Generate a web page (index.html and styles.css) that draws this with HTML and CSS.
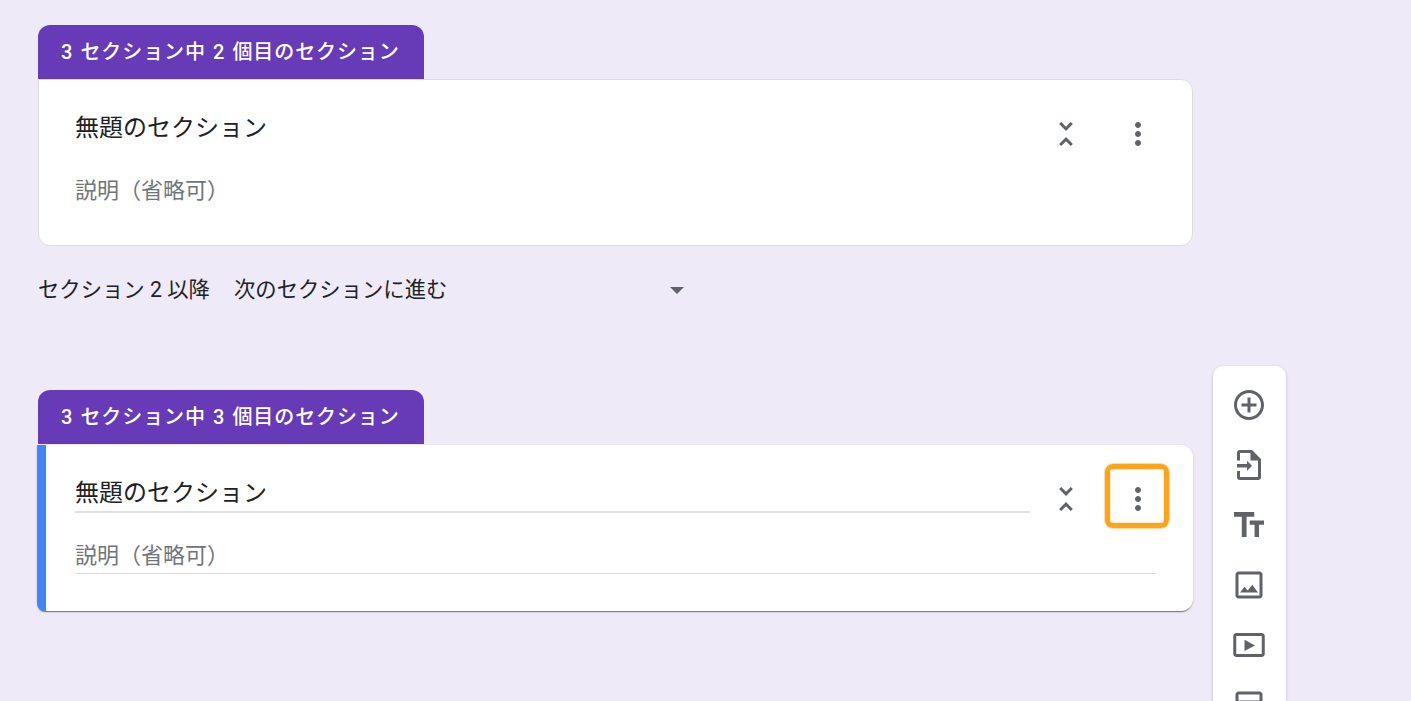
FILE: index.html
```html
<!DOCTYPE html>
<html lang="ja">
<head>
  <meta charset="utf-8">
  <link rel="stylesheet" href="styles.css">
</head>
<body>
  <div class="page">
    <main class="sections">
      <section class="section">
        <div class="section-tab">3 セクション中 2 個目のセクション</div>
        <div class="card">
          <div class="card-head">
            <div class="title-field">無題のセクション</div>
            <button class="icon-btn">
              <svg class="icon" viewBox="0 0 24 24"><path d="M7.41 18.59L8.83 20 12 16.83 15.17 20l1.41-1.41L12 14l-4.59 4.59zm9.18-13.18L15.17 4 12 7.17 8.83 4 7.41 5.41 12 10l4.59-4.59z"/></svg>
            </button>
            <button class="icon-btn">
              <svg class="icon" viewBox="0 0 24 24"><path d="M12 8c1.1 0 2-.9 2-2s-.9-2-2-2-2 .9-2 2 .9 2 2 2zm0 2c-1.1 0-2 .9-2 2s.9 2 2 2 2-.9 2-2-.9-2-2-2zm0 6c-1.1 0-2 .9-2 2s.9 2 2 2 2-.9 2-2-.9-2-2-2z"/></svg>
            </button>
          </div>
          <div class="desc-field">説明（省略可）</div>
        </div>
        <div class="after-row">
          <span class="after-label">セクション 2 以降</span>
          <div class="after-select">
            <span>次のセクションに進む</span>
            <span class="select-arrow"></span>
          </div>
        </div>
      </section>

      <section class="section">
        <div class="section-tab">3 セクション中 3 個目のセクション</div>
        <div class="card active">
          <div class="card-head">
            <div class="title-field">無題のセクション</div>
            <button class="icon-btn">
              <svg class="icon" viewBox="0 0 24 24"><path d="M7.41 18.59L8.83 20 12 16.83 15.17 20l1.41-1.41L12 14l-4.59 4.59zm9.18-13.18L15.17 4 12 7.17 8.83 4 7.41 5.41 12 10l4.59-4.59z"/></svg>
            </button>
            <button class="icon-btn highlighted">
              <svg class="icon" viewBox="0 0 24 24"><path d="M12 8c1.1 0 2-.9 2-2s-.9-2-2-2-2 .9-2 2 .9 2 2 2zm0 2c-1.1 0-2 .9-2 2s.9 2 2 2 2-.9 2-2-.9-2-2-2zm0 6c-1.1 0-2 .9-2 2s.9 2 2 2 2-.9 2-2-.9-2-2-2z"/></svg>
            </button>
          </div>
          <div class="desc-field">説明（省略可）</div>
        </div>
      </section>
    </main>

    <aside class="toolbar">
      <svg class="icon" viewBox="0 0 24 24"><path d="M13 7h-2v4H7v2h4v4h2v-4h4v-2h-4V7zm-1-5C6.48 2 2 6.48 2 12s4.48 10 10 10 10-4.48 10-10S17.52 2 12 2zm0 18c-4.41 0-8-3.59-8-8s3.59-8 8-8 8 3.59 8 8-3.59 8-8 8z"/></svg>
      <svg class="icon" viewBox="0 0 24 24"><path d="M14 2H6a2 2 0 0 0-2 2v5h2V4h7v5h5v11H6v-4H4v4a2 2 0 0 0 2 2h12a2 2 0 0 0 2-2V8z"/><path d="M4 11.300h6.700V9.200l3.300 3.300-3.300 3.300v-2.100H4z"/></svg>
      <svg class="icon" viewBox="0 0 24 24"><path d="M2 3.300v3.200h5.200V20h3.200V6.500h5.100V3.300zM22 9h-9.500v2.800h3.200V20h3v-8.200H22z"/></svg>
      <svg class="icon" viewBox="0 0 24 24"><path d="M19 5v14H5V5h14m0-2H5c-1.1 0-2 .9-2 2v14c0 1.1.9 2 2 2h14c1.1 0 2-.9 2-2V5c0-1.1-.9-2-2-2zm-4.860 8.860l-3 3.870L9 13.140 6 17h12l-3.860-5.140z"/></svg>
      <svg class="icon" viewBox="0 0 24 24"><path d="M20.500 4h-17C2.400 4 1.500 4.900 1.500 6v12c0 1.100.9 2 2 2h17c1.100 0 2-.9 2-2V6c0-1.100-.9-2-2-2zm0 14h-17V6h17v12zM9 8.500v7.500l7-3.750z"/></svg>
      <svg class="icon" viewBox="0 0 24 24"><path d="M19 3H5c-1.100 0-2 .9-2 2v6h18V5c0-1.100-.9-2-2-2zm0 6H5V5h14v4zM3 13v6c0 1.100.9 2 2 2h14c1.100 0 2-.9 2-2v-6H3zm16 6H5v-4h14v4z"/></svg>
    </aside>
  </div>
</body>
</html>
```

FILE: styles.css
```css
:root {
  --bg: #eeeaf8;
  --purple: #673ab7;
  --blue: #4285f4;
  --text: #202124;
  --muted: #70757a;
  --icon: #5f6368;
  --line: #dadce0;
  --mark: #ffa31a;
}

* {
  margin: 0;
  padding: 0;
  box-sizing: border-box;
}

html, body {
  height: 701px;
  overflow: hidden;
}

body {
  background: var(--bg);
  color: var(--text);
  font-family: Roboto, 'Noto Sans CJK JP', sans-serif;
}

.page {
  display: flex;
  align-items: flex-start;
  gap: 20px;
  padding: 25px 0 0 38px;
}

.sections {
  width: 1155px;
  flex-shrink: 0;
}

.section-tab {
  width: 386px;
  height: 54px;
  display: flex;
  align-items: center;
  padding: 0 0 4px 23px;
  background: var(--purple);
  color: #fff;
  font-size: 20px;
  font-weight: 500;
  letter-spacing: 0.9px;
  word-spacing: 1.3px;
  border-radius: 12px 12px 0 0;
  white-space: pre;
}

.card {
  height: 167px;
  padding: 25px 36px 0 36px;
  background: #fff;
  border: 1px solid var(--line);
  border-radius: 0 12px 12px 12px;
}

.card.active {
  height: 166px;
  margin-top: 1px;
  margin-left: -1px;
  padding-left: 29px;
  border: none;
  border-left: 9px solid var(--blue);
  border-radius: 0 12px 12px 8px;
  box-shadow: 0 2px 1px -1px #00000059, 0 1px 1px #00000024, 0 1px 3px #0000001f;
}

.card-head {
  display: flex;
  align-items: flex-start;
}

.title-field {
  width: 955px;
  height: 43px;
  font-size: 24px;
  line-height: 46px;
  margin-right: 18px;
  border-bottom: 2px solid transparent;
}

.active .title-field {
  border-bottom-color: #e0e0e0;
}

.icon-btn {
  width: 36px;
  height: 36px;
  margin-top: 11px;
  background: none;
  border: none;
  position: relative;
}

.icon-btn + .icon-btn {
  margin-left: 36px;
}

.icon {
  display: block;
  width: 36px;
  height: 36px;
  fill: var(--icon);
}

.highlighted::after {
  content: '';
  position: absolute;
  box-sizing: border-box;
  left: -15px;
  top: -17px;
  width: 64px;
  height: 64px;
  border: 5px solid var(--mark);
  border-radius: 8px;
  box-shadow: 0 0 0 1px #ffa31a66, inset 0 0 0 1px #ffa31a33;
}

.desc-field {
  width: 1081px;
  height: 40px;
  margin-top: 17px;
  color: var(--muted);
  font-size: 22px;
  line-height: 44px;
  border-bottom: 1px solid transparent;
}

.active .desc-field {
  border-bottom-color: var(--line);
}

.after-row {
  display: flex;
  align-items: center;
  height: 82px;
  margin-bottom: 62px;
  font-size: 21.33px;
  white-space: nowrap;
}

.after-label {
  width: 196px;
}

.after-select {
  width: 450px;
  display: flex;
  align-items: center;
  justify-content: space-between;
}

.select-arrow {
  width: 0;
  height: 0;
  margin-top: 6px;
  border-left: 7px solid transparent;
  border-right: 7px solid transparent;
  border-top: 7px solid var(--icon);
}

.toolbar {
  width: 73px;
  margin-top: 341px;
  padding: 21px 1px 0 0;
  display: flex;
  flex-direction: column;
  align-items: center;
  gap: 24px;
  background: #fff;
  border-radius: 10px;
  box-shadow: 0 1px 3px #0000003d;
}
```
